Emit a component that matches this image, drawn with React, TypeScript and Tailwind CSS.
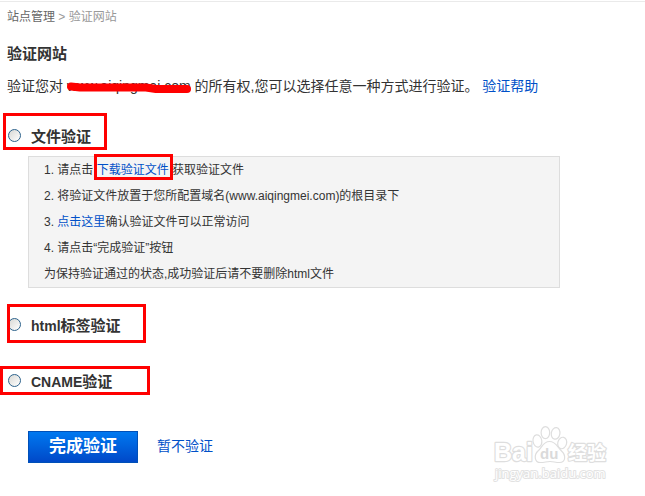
import { ReactNode } from "react";

function Highlight({ className }: { className: string }) {
  return (
    <span
      aria-hidden="true"
      className={`pointer-events-none absolute border-3 border-[#ff0000] ${className}`}
    />
  );
}

function Option({
  id,
  className,
  highlight,
  children,
}: {
  id: string;
  className: string;
  highlight: string;
  children: ReactNode;
}) {
  return (
    <div className={`relative flex h-6 items-center gap-2.5 pl-px ${className}`}>
      <input
        id={id}
        type="radio"
        name="method"
        className="mb-1 size-[13px] shrink-0 appearance-none rounded-full border border-[#2c628b] bg-linear-to-br from-[#d8d8d4] to-white checked:border-4"
      />
      <label htmlFor={id} className="text-[15px] leading-6 font-bold">
        {children}
      </label>
      <Highlight className={highlight} />
    </div>
  );
}

function Watermark() {
  return (
    <svg
      className="mr-[35px] ml-auto shrink-0"
      width="118"
      height="60"
      viewBox="0 0 118 60"
      role="img"
      aria-label="Baidu 经验"
    >
      <g fill="#ffffff" stroke="#dedede" strokeWidth="1.2">
        <ellipse cx="45.4" cy="16" rx="4.4" ry="6.2" transform="rotate(-10 45.4 16)" />
        <ellipse cx="53.4" cy="7.6" rx="4.3" ry="6" />
        <ellipse cx="63.6" cy="8.4" rx="4.3" ry="5.800" transform="rotate(10 63.6 8.4)" />
        <ellipse cx="70.2" cy="18" rx="4.400" ry="5.800" transform="rotate(15 70.2 18)" />
        <path d="M57.500 16.500 C51 16.500 50 22.500 46 26 C42 29.500 42 37.500 48.500 37.500 C53 37.500 54 36.500 58 36.500 C62 36.500 63 37.500 67.500 37.500 C74 37.500 74 30 69.500 26 C65.500 22.500 64 16.500 57.500 16.500 Z" />
      </g>
      <g
        fontWeight="bold"
        fill="#ffffff"
        stroke="#dedede"
        strokeWidth="2.4"
        strokeLinejoin="round"
        paintOrder="stroke"
      >
        <text x="2" y="36" fontSize="25" fontFamily="'Liberation Sans', sans-serif">
          Bai
        </text>
        <text x="76" y="35" fontSize="19" fontFamily="'Noto Sans CJK SC', sans-serif">
          经验
        </text>
      </g>
      <text
        x="48"
        y="34"
        fontSize="15"
        fontWeight="bold"
        fill="#dadada"
        fontFamily="'Liberation Sans', sans-serif"
      >
        du
      </text>
      <text
        x="3"
        y="53"
        fontSize="13"
        fill="#ffffff"
        stroke="#e2e2e2"
        strokeWidth="2"
        strokeLinejoin="round"
        paintOrder="stroke"
        fontFamily="'Open Sans', sans-serif"
      >
        jingyan.baidu.com
      </text>
    </svg>
  );
}

export default function App() {
  return (
    <div className="pt-px font-['Liberation_Sans','Noto_Sans_CJK_SC',sans-serif] text-[#333333]">
      <main className="border-t border-[#eaeaea] pl-[7px]">
        <nav className="text-xs leading-[30px] text-[#999999]">
          <a href="#sites" className="text-[#666666]">
            站点管理
          </a>{" "}
          &gt; 验证网站
        </nav>

        <h1 className="mt-2.5 text-[15px] leading-6 font-bold">验证网站</h1>

        <p className="mt-2 text-sm leading-6">
          验证您对{" "}
          <span className="relative inline-block">
            www.aiqingmei.com
            <svg
              aria-hidden="true"
              className="absolute top-2 -left-px"
              width="126"
              height="12"
              viewBox="0 0 126 12"
            >
              <path
                d="M5 4.500 L14 5.500 L80 5.500 L90 7 L121 7"
                fill="none"
                stroke="#ff0000"
                strokeWidth="8"
                strokeLinecap="round"
                strokeLinejoin="round"
              />
            </svg>
          </span>{" "}
          的所有权,您可以选择任意一种方式进行验证。{" "}
          <a href="#help" className="text-[#0050c8]">
            验证帮助
          </a>
        </p>

        <form onSubmit={(e) => e.preventDefault()}>
          <Option id="file" className="mt-[27px]" highlight="-top-3 -left-1 h-[37px] w-[104px]">
            文件验证
          </Option>

          <div className="mt-[7px] mr-[85px] ml-[21px] border border-[#dddddd] bg-[#f4f4f4] pl-[15px] text-xs leading-[26px]">
            <ol>
              <li>
                1. 请点击{" "}
                <a href="#download" className="relative inline-block text-[#0050c8]">
                  下载验证文件
                  <Highlight className="-top-[3px] -left-[3px] h-[26px] w-[79px]" />
                </a>{" "}
                获取验证文件
              </li>
              <li>2. 将验证文件放置于您所配置域名(www.aiqingmei.com)的根目录下</li>
              <li>
                3.{" "}
                <a href="#check" className="text-[#0050c8]">
                  点击这里
                </a>
                确认验证文件可以正常访问
              </li>
              <li>4. 请点击“完成验证”按钮</li>
            </ol>
            <p>为保持验证通过的状态,成功验证后请不要删除html文件</p>
          </div>

          <Option id="html" className="mt-[26px]" highlight="-top-2.5 left-0 h-[39px] w-[139px]">
            <span className="text-sm">html</span>标签验证
          </Option>
          <Option id="cname" className="mt-8" highlight="-top-1 -left-[7px] h-[29px] w-[150px]">
            <span className="text-sm">CNAME</span>验证
          </Option>

          <div className="mt-[31px] flex items-start pl-[21px]">
            <button
              type="submit"
              className="mt-1.5 h-8 w-[110px] border border-[#0050b8] bg-linear-to-b from-[#0078f0] to-[#0048c8] text-[17px] leading-6 font-bold text-white"
            >
              完成验证
            </button>
            <a href="#skip" className="mt-[7px] ml-[19px] text-sm leading-7 text-[#0050c8]">
              暂不验证
            </a>
            <Watermark />
          </div>
        </form>
      </main>
    </div>
  );
}
